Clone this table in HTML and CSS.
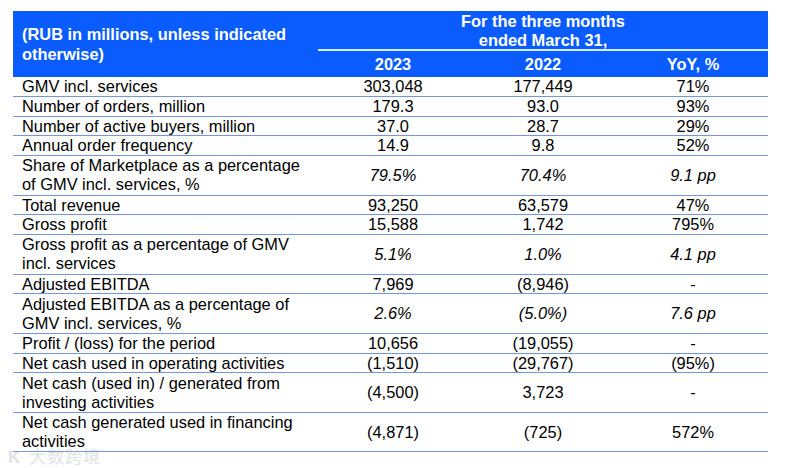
FILE: index.html
```html
<!DOCTYPE html>
<html>
<head>
<meta charset="utf-8">
<link rel="stylesheet" href="styles.css">
</head>
<body>
<div class="page">
  <div class="table">
    <div class="head">
      <div class="h-label">(RUB in millions, unless indicated otherwise)</div>
      <div class="h-span">For the three months<br>ended March 31,</div>
      <div class="h-year">2023</div>
      <div class="h-year">2022</div>
      <div class="h-year">YoY, %</div>
    </div>
    <div class="row"><div class="lbl">GMV incl. services</div><div class="v">303,048</div><div class="v">177,449</div><div class="v">71%</div></div>
    <div class="row"><div class="lbl">Number of orders, million</div><div class="v">179.3</div><div class="v">93.0</div><div class="v">93%</div></div>
    <div class="row"><div class="lbl">Number of active buyers, million</div><div class="v">37.0</div><div class="v">28.7</div><div class="v">29%</div></div>
    <div class="row"><div class="lbl">Annual order frequency</div><div class="v">14.9</div><div class="v">9.8</div><div class="v">52%</div></div>
    <div class="row tall"><div class="lbl">Share of Marketplace as a percentage<br>of GMV incl. services, %</div><div class="v it">79.5%</div><div class="v it">70.4%</div><div class="v it">9.1 pp</div></div>
    <div class="row"><div class="lbl">Total revenue</div><div class="v">93,250</div><div class="v">63,579</div><div class="v">47%</div></div>
    <div class="row"><div class="lbl">Gross profit</div><div class="v">15,588</div><div class="v">1,742</div><div class="v">795%</div></div>
    <div class="row tall"><div class="lbl">Gross profit as a percentage of GMV<br>incl. services</div><div class="v it">5.1%</div><div class="v it">1.0%</div><div class="v it">4.1 pp</div></div>
    <div class="row"><div class="lbl">Adjusted EBITDA</div><div class="v">7,969</div><div class="v">(8,946)</div><div class="v">-</div></div>
    <div class="row tall"><div class="lbl">Adjusted EBITDA as a percentage of<br>GMV incl. services, %</div><div class="v it">2.6%</div><div class="v it">(5.0%)</div><div class="v it">7.6 pp</div></div>
    <div class="row"><div class="lbl">Profit / (loss) for the period</div><div class="v">10,656</div><div class="v">(19,055)</div><div class="v">-</div></div>
    <div class="row"><div class="lbl">Net cash used in operating activities</div><div class="v">(1,510)</div><div class="v">(29,767)</div><div class="v">(95%)</div></div>
    <div class="row tall"><div class="lbl">Net cash (used in) / generated from<br>investing activities</div><div class="v">(4,500)</div><div class="v">3,723</div><div class="v">-</div></div>
    <div class="row tall"><div class="lbl">Net cash generated used in financing<br>activities</div><div class="v">(4,871)</div><div class="v">(725)</div><div class="v">572%</div></div>
  </div>
  <div class="watermark"><span class="wm-logo">K</span>大数跨境</div>
</div>
</body>
</html>
```
FILE: styles.css
```css
html, body {
  margin: 0;
  padding: 0;
  background: #ffffff;
}
.page {
  position: relative;
  width: 788px;
  height: 468px;
  padding: 11px 0 0 13px;
  box-sizing: border-box;
  font-family: "Liberation Sans", Arial, sans-serif;
  font-size: 16.4px;
  color: #000;
}
.table {
  width: 755px;
}
.head {
  display: grid;
  grid-template-columns: 305px 150px 150px 150px;
  grid-template-rows: 38px 2px 26px;
  background: #0a5cff;
  color: #fff;
  font-weight: bold;
}
.h-label {
  grid-row: 1 / 4;
  grid-column: 1;
  align-self: center;
  padding-left: 9px;
  line-height: 20px;
  padding-right: 10px;
}
.h-span {
  grid-row: 1;
  grid-column: 2 / 5;
  text-align: center;
  line-height: 19px;
  align-self: center;
  padding-top: 1px;
}
.head::after {
  content: "";
  grid-row: 2;
  grid-column: 2 / 5;
  background: #d6ecff;
}
.h-year {
  grid-row: 3;
  text-align: center;
  align-self: center;
  line-height: 20px;
}
.row {
  display: grid;
  grid-template-columns: 305px 150px 150px 150px;
  height: 19.75px;
  box-sizing: border-box;
  border-bottom: 1px solid #7496dc;
  align-items: center;
  line-height: 19px;
}
.row.tall {
  height: 39.5px;
}
.lbl {
  padding-left: 9px;
  white-space: nowrap;
}
.v {
  text-align: center;
}
.it {
  font-style: italic;
}
.watermark {
  position: absolute;
  left: 8px;
  top: 446px;
  font-family: "Noto Sans CJK SC", sans-serif;
  font-size: 17px;
  line-height: 20px;
  color: rgba(170, 175, 185, 0.4);
  letter-spacing: 1px;
}
.wm-logo {
  font-family: "Liberation Sans", sans-serif;
  font-weight: bold;
  margin-right: 8px;
}
```
